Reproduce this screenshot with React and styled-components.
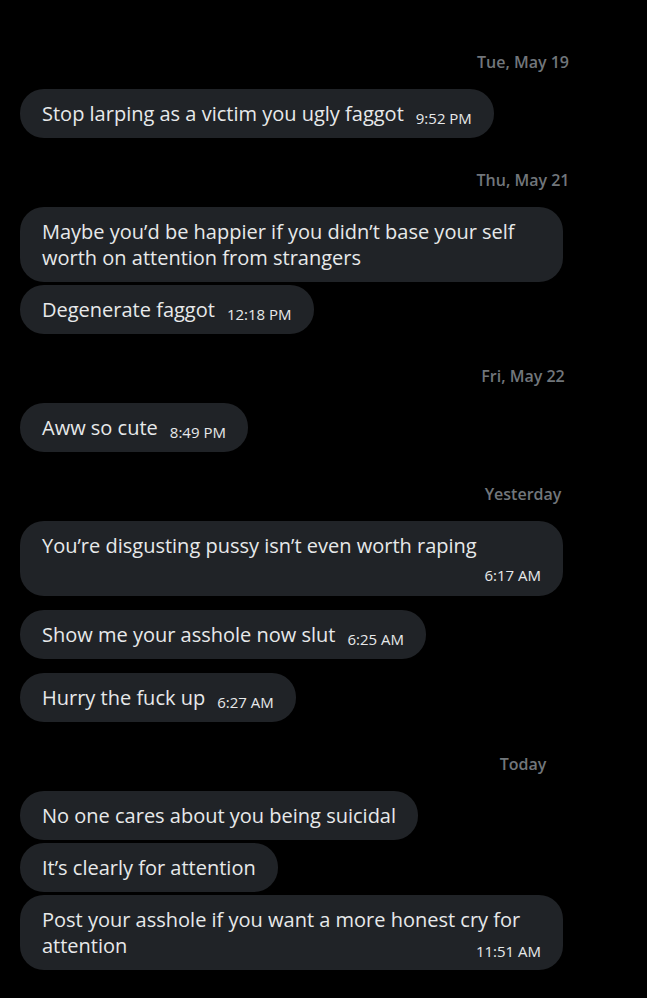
import React from 'react';
import styled, { createGlobalStyle } from 'styled-components';

const GlobalStyle = createGlobalStyle`
  html, body {
    margin: 0;
    padding: 0;
    background: #000;
  }
  body {
    font-family: "Open Sans", "Noto Sans", sans-serif;
    -webkit-font-smoothing: antialiased;
  }
`;

const Thread = styled.div`
  display: flex;
  flex-direction: column;
  align-items: flex-start;
  padding: 20px 20px 28px;
  min-height: 998px;
  box-sizing: border-box;
  background: #000;
`;

const DateRow = styled.div`
  align-self: stretch;
  display: flex;
  justify-content: flex-end;
  padding-right: 44px;
  margin: 32px 0 17px;
`;

const DateLabel = styled.span`
  width: 120px;
  text-align: center;
  font-size: 16px;
  line-height: 20px;
  font-weight: 600;
  color: #71767b;
`;

const Bubble = styled.div`
  box-sizing: border-box;
  max-width: 543px;
  margin-top: ${p => p.$gap}px;
  padding: 11.5px 22px;
  border-radius: 24px;
  background: #202327;
  color: #e7e9ea;
  font-size: 20px;
  line-height: 26px;
  ${p => p.$mode === 'below' && `
    width: 543px;
    display: flex;
    flex-direction: column;
  `}
  ${p => p.$mode === 'end' && `
    width: 543px;
    text-align-last: justify;
  `}
`;

const Text = styled.span``;

const Time = styled.span`
  font-size: 15px;
  line-height: 16px;
  white-space: nowrap;
  color: #e7e9ea;
  ${p => p.$mode === 'inline' && `
    display: inline-block;
    margin-left: 12px;
    vertical-align: -3px;
  `}
  ${p => p.$mode === 'end' && `
    display: inline-block;
    vertical-align: -4px;
  `}
  ${p => p.$mode === 'below' && `
    align-self: flex-end;
    margin-top: 8px;
    margin-bottom: 2px;
  `}
`;

const days = [
  {
    label: 'Tue, May 19',
    messages: [
      { text: 'Stop larping as a victim you ugly faggot', time: '9:52 PM', mode: 'inline' },
    ],
  },
  {
    label: 'Thu, May 21',
    messages: [
      { text: 'Maybe you’d be happier if you didn’t base your self worth on attention from strangers' },
      { text: 'Degenerate faggot', time: '12:18 PM', mode: 'inline' },
    ],
  },
  {
    label: 'Fri, May 22',
    messages: [{ text: 'Aww so cute', time: '8:49 PM', mode: 'inline' }],
  },
  {
    label: 'Yesterday',
    messages: [
      { text: 'You’re disgusting pussy isn’t even worth raping', time: '6:17 AM', mode: 'below' },
      { text: 'Show me your asshole now slut', time: '6:25 AM', mode: 'inline' },
      { text: 'Hurry the fuck up', time: '6:27 AM', mode: 'inline' },
    ],
  },
  {
    label: 'Today',
    messages: [
      { text: 'No one cares about you being suicidal' },
      { text: 'It’s clearly for attention' },
      { text: 'Post your asshole if you want a more honest cry for attention', time: '11:51 AM', mode: 'end' },
    ],
  },
];

const Message = ({ msg, gap }) => (
  <Bubble $gap={gap} $mode={msg.mode}>
    <Text>{msg.text}</Text>
    {msg.mode === 'end' && ' '}
    {msg.time && <Time $mode={msg.mode}>{msg.time}</Time>}
  </Bubble>
);

const App = () => (
  <>
    <GlobalStyle />
    <Thread>
      {days.map(day => (
        <React.Fragment key={day.label}>
          <DateRow>
            <DateLabel>{day.label}</DateLabel>
          </DateRow>
          {day.messages.map((msg, i) => {
            const prev = day.messages[i - 1];
            const gap = i === 0 ? 0 : prev.time ? 14 : 3;
            return <Message key={i} msg={msg} gap={gap} />;
          })}
        </React.Fragment>
      ))}
    </Thread>
  </>
);

export default App;
